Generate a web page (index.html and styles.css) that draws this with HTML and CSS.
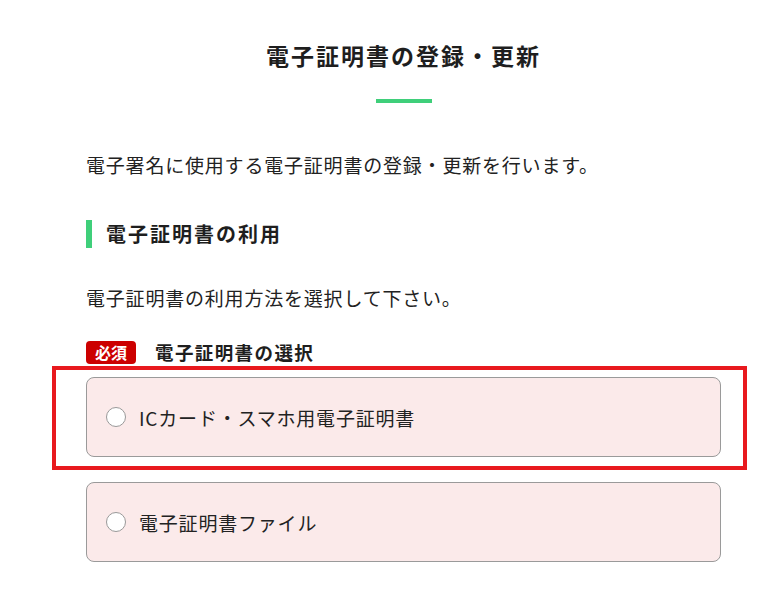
FILE: index.html
```html
<!DOCTYPE html>
<html lang="ja">
<head>
  <meta charset="utf-8">
  <title>電子証明書の登録・更新</title>
  <link rel="stylesheet" href="styles.css">
</head>
<body>
  <div class="container">
    <h1 class="page-title">電子証明書の登録・更新</h1>
    <div class="title-bar"></div>

    <p class="lead">電子署名に使用する電子証明書の登録・更新を行います。</p>

    <h2 class="section-title">電子証明書の利用</h2>
    <p class="desc">電子証明書の利用方法を選択して下さい。</p>

    <div class="field-label">
      <span class="badge">必須</span>
      <span class="label-text">電子証明書の選択</span>
    </div>

    <div class="choices">
      <div class="choice-wrap">
        <label class="choice">
          <input type="radio" name="cert-type" value="ic-card">
          <span class="choice-text">ICカード・スマホ用電子証明書</span>
        </label>
        <div class="highlight"></div>
      </div>
      <label class="choice">
        <input type="radio" name="cert-type" value="file">
        <span class="choice-text">電子証明書ファイル</span>
      </label>
    </div>
  </div>
</body>
</html>
```

FILE: styles.css
```css
body {
  font-family: "Noto Sans CJK JP", "Noto Sans", sans-serif;
  background-color: #fff;
  color: #222;
  margin: 0;
  padding: 0;
}
.container {
  width: 635px;
  margin-left: 86px;
  padding-top: 38px;
}
.page-title {
  margin: 0;
  text-align: center;
  font-size: 23px;
  line-height: 34px;
  letter-spacing: 2px;
  color: #1e1e1e;
}
.title-bar {
  width: 56px;
  height: 4px;
  margin: 27px auto 0;
  background-color: #3fcf7a;
}
.lead, .desc {
  margin: 0;
  font-size: 19px;
  line-height: 30px;
  letter-spacing: 0.8px;
}
.lead {
  margin-top: 47px;
}
.section-title {
  margin: 40px 0 0;
  padding-left: 14px;
  border-left: 6px solid #3fcf7a;
  font-size: 20px;
  line-height: 28px;
  letter-spacing: 2px;
  color: #1e1e1e;
}
.desc {
  margin-top: 35px;
}
.field-label {
  display: flex;
  align-items: center;
  gap: 19px;
  margin-top: 27px;
  height: 24px;
}
.badge {
  display: inline-block;
  width: 50px;
  height: 23px;
  line-height: 23px;
  text-align: center;
  background-color: #cc0000;
  color: #fff;
  font-size: 16px;
  font-weight: bold;
  border-radius: 4px;
}
.label-text {
  font-size: 18.5px;
  font-weight: bold;
  letter-spacing: 1.4px;
  color: #1e1e1e;
}
.choices {
  display: flex;
  flex-direction: column;
  gap: 25px;
  margin-top: 13px;
}
.choice-wrap {
  position: relative;
}
.choice {
  display: flex;
  align-items: center;
  height: 80px;
  box-sizing: border-box;
  padding-left: 19px;
  background-color: #fbeaea;
  border: 1px solid #9a9a9a;
  border-radius: 8px;
  cursor: pointer;
}
.choice input[type="radio"] {
  appearance: none;
  width: 20px;
  height: 20px;
  margin: 0 13px 0 0;
  background-color: #fff;
  border: 1px solid #999;
  border-radius: 50%;
}
.choice-text {
  font-size: 19px;
  letter-spacing: 0.8px;
  color: #222;
}
.highlight {
  position: absolute;
  left: -34px;
  top: -11px;
  width: 695px;
  height: 104px;
  box-sizing: border-box;
  border: 4px solid #e8191e;
  pointer-events: none;
}
```
